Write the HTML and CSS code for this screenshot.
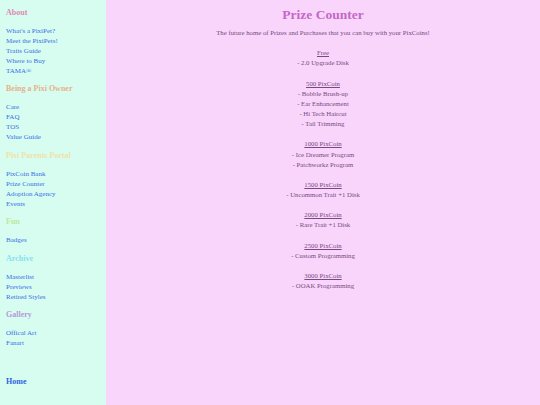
FILE: index.html
```html
<!DOCTYPE html>
<html>
<head>
<meta charset="utf-8">
<link rel="stylesheet" href="styles.css">
</head>
<body>
<div class="page">
  <nav class="sidebar">
    <section class="group">
      <h2 class="head head-about">About</h2>
      <a href="#">What's a PixiPet?</a>
      <a href="#">Meet the PixiPets!</a>
      <a href="#">Traits Guide</a>
      <a href="#">Where to Buy</a>
      <a href="#">TAMA®</a>
    </section>
    <section class="group">
      <h2 class="head head-owner">Being a Pixi Owner</h2>
      <a href="#">Care</a>
      <a href="#">FAQ</a>
      <a href="#">TOS</a>
      <a href="#">Value Guide</a>
    </section>
    <section class="group">
      <h2 class="head head-portal">Pixi Parents Portal</h2>
      <a href="#">PixCoin Bank</a>
      <a href="#">Prize Counter</a>
      <a href="#">Adoption Agency</a>
      <a href="#">Events</a>
    </section>
    <section class="group">
      <h2 class="head head-fun">Fun</h2>
      <a href="#">Badges</a>
    </section>
    <section class="group">
      <h2 class="head head-archive">Archive</h2>
      <a href="#">Masterlist</a>
      <a href="#">Previews</a>
      <a href="#">Retired Styles</a>
    </section>
    <section class="group">
      <h2 class="head head-gallery">Gallery</h2>
      <a href="#">Offical Art</a>
      <a href="#">Fanart</a>
    </section>
    <a class="home" href="#">Home</a>
  </nav>
  <main class="main">
    <h1 class="title">Prize Counter</h1>
    <p class="intro">The future home of Prizes and Purchases that you can buy with your PixCoins!</p>
    <div class="tier"><u>Free</u><span>- 2.0 Upgrade Disk</span></div>
    <div class="tier"><u>500 PixCoin</u><span>- Bobble Brush-up</span><span>- Ear Enhancement</span><span>- Hi Tech Haircut</span><span>- Tail Trimming</span></div>
    <div class="tier"><u>1000 PixCoin</u><span>- Ice Dreamer Program</span><span>- Patchworkz Program</span></div>
    <div class="tier"><u>1500 PixCoin</u><span>- Uncommon Trait +1 Disk</span></div>
    <div class="tier"><u>2000 PixCoin</u><span>- Rare Trait +1 Disk</span></div>
    <div class="tier"><u>2500 PixCoin</u><span>- Custom Programming</span></div>
    <div class="tier"><u>3000 PixCoin</u><span>- OOAK Programming</span></div>
  </main>
</div>
</body>
</html>
```

FILE: styles.css
```css
html, body {
  margin: 0;
  padding: 0;
  height: 100%;
}
body {
  font-family: "Liberation Serif", "Times New Roman", serif;
  background: #f9d5fb;
}
.page {
  display: flex;
  min-height: 405px;
}
.sidebar {
  width: 106px;
  flex: none;
  background: #d6fdf0;
  padding: 5.5px 6px;
  box-sizing: border-box;
  display: flex;
  flex-direction: column;
}
.group {
  display: flex;
  flex-direction: column;
  margin-bottom: 6.5px;
}
.head {
  margin: 0 0 7px;
  font-size: 8px;
  line-height: 13px;
  font-weight: bold;
}
.head-about { color: #e08ab4; }
.head-owner { color: #eab08a; }
.head-portal { color: #f2e2a6; }
.head-fun { color: #bce99c; }
.head-archive { color: #86e2ee; }
.head-gallery { color: #b69ad6; }
.group a {
  color: #3a6ee8;
  text-decoration: none;
  font-size: 7px;
  line-height: 10px;
}
.home {
  margin-top: 20px;
  color: #2f62e0;
  font-weight: bold;
  text-decoration: none;
  font-size: 8px;
  line-height: 13px;
}
.main {
  flex: 1;
  text-align: center;
  color: #784a80;
  font-size: 6.75px;
  line-height: 10.14px;
}
.title {
  margin: 6px 0 0;
  font-size: 13.5px;
  line-height: 17px;
  color: #c468c8;
}
.intro {
  margin: 5px 0 10px;
}
.tier {
  display: flex;
  flex-direction: column;
  margin-bottom: 10.14px;
}
```
